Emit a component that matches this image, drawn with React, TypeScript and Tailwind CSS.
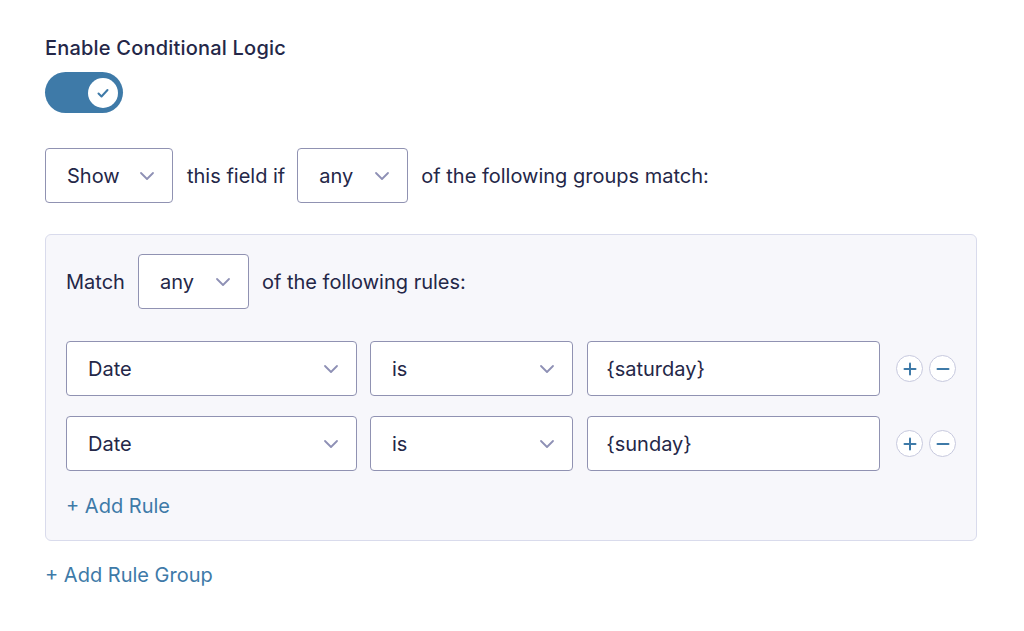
import React from "react";

const Chevron = () => (
  <svg width="16" height="10" viewBox="0 0 16 10" fill="none" className="shrink-0">
    <path d="M2 2l6 6 6-6" stroke="#8e90b5" strokeWidth="1.8" strokeLinecap="round" strokeLinejoin="round" />
  </svg>
);

function Select({ label, className }: { label: string; className: string }) {
  return (
    <div
      className={`flex h-[55px] items-center justify-between rounded-[4px] border border-[#9092b2] bg-white pl-[21px] pr-[17px] ${className}`}
    >
      <span>{label}</span>
      <Chevron />
    </div>
  );
}

function RoundBtn({ minus }: { minus?: boolean }) {
  return (
    <div className="flex h-[27px] w-[27px] items-center justify-center rounded-full border border-[#c7c9de] bg-white">
      <svg width="14" height="14" viewBox="0 0 14 14">
        <path d="M1.5 7h11" stroke="#3e7aa8" strokeWidth="2" strokeLinecap="round" />
        {!minus && <path d="M7 1.5v11" stroke="#3e7aa8" strokeWidth="2" strokeLinecap="round" />}
      </svg>
    </div>
  );
}

function Rule({ value }: { value: string }) {
  return (
    <div className="flex items-center">
      <Select label="Date" className="w-[292px]" />
      <Select label="is" className="ml-[13px] w-[204px]" />
      <div className="ml-[14px] flex h-[55px] w-[294px] items-center rounded-[4px] border border-[#9092b2] bg-white pl-[18px]">
        {value}
      </div>
      <div className="ml-[16px] flex gap-[6px]">
        <RoundBtn />
        <RoundBtn minus />
      </div>
    </div>
  );
}

export default function App() {
  return (
    <div
      className="min-h-[631px] w-[1024px] bg-white pl-[45px] pt-[36px] text-[20px] text-[#242748]"
      style={{ fontFamily: "Inter, 'Noto Sans', sans-serif" }}
    >
      <div className="text-[20px] font-medium leading-[25px] tracking-[0.2px]">Enable Conditional Logic</div>
      <div className="mt-[11px] flex h-[41px] w-[78px] items-center justify-end rounded-full bg-[#3e7aa8] pr-[5px]">
        <div className="flex h-[30px] w-[30px] items-center justify-center rounded-full bg-white">
          <svg width="14" height="12" viewBox="0 0 14 12" fill="none">
            <path d="M2.5 6.5l3 3 6-6.5" stroke="#3e7aa8" strokeWidth="2" strokeLinecap="round" strokeLinejoin="round" />
          </svg>
        </div>
      </div>

      <div className="mt-[35px] flex items-center">
        <Select label="Show" className="w-[128px]" />
        <span className="ml-[14px]">this field if</span>
        <Select label="any" className="ml-[12px] w-[111px]" />
        <span className="ml-[13px]">of the following groups match:</span>
      </div>

      <div className="mt-[31px] w-[932px] rounded-[6px] border border-[#d9dbec] bg-[#f7f7fb] px-[20px] pb-[19px] pt-[19px]">
        <div className="flex items-center">
          <span>Match</span>
          <Select label="any" className="ml-[13px] w-[111px]" />
          <span className="ml-[13px]">of the following rules:</span>
        </div>
        <div className="mt-[32px] flex flex-col gap-[20px]">
          <Rule value="{saturday}" />
          <Rule value="{sunday}" />
        </div>
        <div className="mt-[20px] text-[#3e7aa8]">+ Add Rule</div>
      </div>

      <div className="mt-[19px] text-[#3e7aa8]">+ Add Rule Group</div>
    </div>
  );
}
